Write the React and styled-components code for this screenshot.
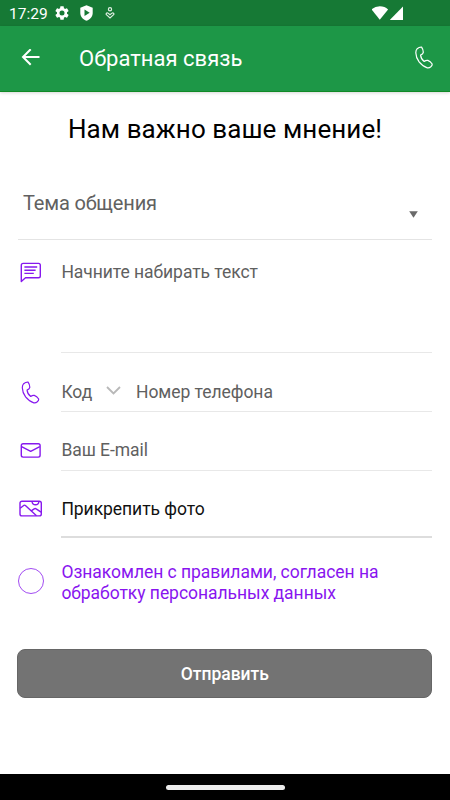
import React from 'react';
import styled, { createGlobalStyle } from 'styled-components';

const GlobalStyle = createGlobalStyle`
  * { box-sizing: border-box; }
  body { margin: 0; background: #fff; font-family: Roboto, "Noto Sans", sans-serif; }
  svg { display: block; flex: none; }
`;

const Screen = styled.div`
  width: 450px;
  height: 800px;
  display: flex;
  flex-direction: column;
  background: #fff;
  overflow: hidden;
`;

const StatusBar = styled.header`
  height: 26px;
  flex: none;
  display: flex;
  align-items: center;
  padding: 0 46px 0 9px;
  background: #167935;
  color: #fff;
`;

const Clock = styled.span`
  width: 46px;
  font-size: 15.5px;
  line-height: 26px;
  padding-top: 2px;
  white-space: nowrap;
`;

const StatusIcons = styled.div`
  display: flex;
  align-items: center;
  gap: ${(p) => p.$gap}px;
  margin-left: ${(p) => (p.$end ? 'auto' : '0')};
`;

const AppBar = styled.div`
  height: 66px;
  flex: none;
  display: flex;
  align-items: center;
  padding: 0 17px 2px 21px;
  background: #1d9747;
  border-bottom: 1px solid #108a26;
  box-shadow: 0 1px 3px rgba(0, 0, 0, 0.16);
  color: #fff;
`;

const AppTitle = styled.h1`
  margin: 0 auto 0 38px;
  padding-top: 2px;
  font-size: 22px;
  font-weight: 400;
  line-height: 30px;
`;

const Form = styled.main`
  flex: 1;
  display: flex;
  flex-direction: column;
  padding: 20px 18px 0;
`;

const Heading = styled.h2`
  margin: 0;
  height: 34px;
  text-align: center;
  font-size: 26px;
  font-weight: 400;
  line-height: 34px;
  letter-spacing: 0.08px;
  color: #000;
  white-space: nowrap;
`;

const Topic = styled.div`
  height: 94px;
  display: flex;
  justify-content: space-between;
  padding: 43px 14px 0 5px;
  border-bottom: 1px solid #e4e4e4;
  font-size: 20px;
  line-height: 28px;
  letter-spacing: -0.17px;
  color: #616161;

  svg { margin-top: 22px; }
`;

const Row = styled.div`
  height: ${(p) => p.$height}px;
  flex: none;
  display: grid;
  grid-template-columns: 43px 1fr;
`;

const IconCell = styled.div`
  padding-top: ${(p) => p.$top}px;
  color: #8718ee;
`;

const Field = styled.div`
  display: flex;
  align-items: flex-start;
  padding: ${(p) => p.$top}px 0 0 0.4px;
  border-bottom: ${(p) => (p.$strong ? '2px solid #dddddd' : '1px solid #e8e8e8')};
  font-size: 17.5px;
  line-height: 24px;
  letter-spacing: -0.05px;
  color: ${(p) => (p.$strong ? '#111' : '#606060')};
  white-space: nowrap;
`;

const CodeSelect = styled.span`
  width: 74.6px;
  display: flex;
  align-items: center;
  gap: 14px;

  svg { margin-top: -3px; }
`;

const Consent = styled.label`
  height: 60px;
  display: grid;
  grid-template-columns: 43.4px 1fr;
  margin-top: 13px;
  padding-top: 11px;
  font-size: 17.5px;
  line-height: 20.5px;
  letter-spacing: -0.04px;
  color: #8814ef;
  white-space: nowrap;
`;

const Radio = styled.span`
  width: 26px;
  height: 26px;
  margin-top: 6px;
  border: 1px solid #a24cf2;
  border-radius: 50%;
`;

const Submit = styled.button`
  height: 49px;
  flex: none;
  margin: 38px -0.3px 0 -0.7px;
  padding: 1px 0 0;
  border: 1px solid #666;
  border-radius: 8px;
  background: #737373;
  color: #fff;
  font: 500 17.5px Roboto, sans-serif;
`;

const NavBar = styled.footer`
  height: 26px;
  flex: none;
  display: flex;
  justify-content: center;
  align-items: center;
  background: #000;
`;

const Handle = styled.div`
  width: 119px;
  height: 5px;
  border-radius: 3px;
  background: #ececec;
`;

const Phone = ({ w, h, stroke }) => (
  <svg width={w} height={h} viewBox="0 0 18 23" fill="none" stroke="currentColor" strokeWidth={stroke} strokeLinejoin="round">
    <path d="M2.2 2.7Q4.2.9 6.6 1.1Q8.3 3.5 8.3 6.3Q8.1 7.8 5.6 9.1Q5.8 12.7 9.2 15.5Q11.2 13.9 12.8 14.4Q15.4 15.4 17.2 18Q17.3 19.4 15.8 20.8Q14.3 22.1 12.3 21.8Q7.9 20.6 4.1 15.9Q.9 11.4.8 6.7Q.8 4.2 2.2 2.7Z" />
  </svg>
);

const Gear = () => (
  <svg width="14" height="14" viewBox="2 2 20 20" fill="#fff">
    <path d="M19.14 12.94c.04-.3.06-.61.06-.94s-.02-.64-.07-.94l2.03-1.58a.49.49 0 0 0 .12-.61l-1.92-3.32a.49.49 0 0 0-.59-.22l-2.39.96a7 7 0 0 0-1.62-.94l-.36-2.54a.48.48 0 0 0-.48-.41h-3.84a.48.48 0 0 0-.47.41l-.36 2.54c-.59.24-1.13.57-1.62.94l-2.39-.96a.48.48 0 0 0-.59.22L2.74 8.87a.47.47 0 0 0 .12.61l2.03 1.58a6.4 6.4 0 0 0 0 1.88l-2.03 1.58a.49.49 0 0 0-.12.61l1.92 3.32c.12.22.37.29.59.22l2.39-.96c.5.38 1.03.7 1.62.94l.36 2.54c.05.24.24.41.48.41h3.84c.24 0 .44-.17.47-.41l.36-2.54a7 7 0 0 0 1.62-.94l2.39.96c.22.08.47 0 .59-.22l1.92-3.32a.47.47 0 0 0-.12-.61zM12 15.6a3.6 3.6 0 1 1 0-7.2 3.6 3.6 0 0 1 0 7.2z" />
  </svg>
);

const Shield = () => (
  <svg width="13" height="16" viewBox="0 0 13 16">
    <path d="M6.5.3 12.7 2.7v5.2c0 3.6-2.6 6.4-6.2 7.8C2.9 14.3.3 11.5.3 7.9V2.7z" fill="#fff" />
    <path d="m4.5 4.6 5.2 3.2-5.2 3.3z" fill="#167935" />
  </svg>
);

const Care = () => (
  <svg width="12" height="12" viewBox="-2 0 12 12" fill="none" stroke="#e0eee2" strokeWidth="1.2">
    <circle cx="5" cy="2.3" r="1.6" />
    <path d="M5 7.8 3 6.1a1.1 1.1 0 1 0-1.4 1.8L5 10.9l3.4-3a1.1 1.1 0 1 0-1.4-1.8z" />
  </svg>
);

const Wifi = () => (
  <svg width="18" height="14" viewBox="0 0 18 14" fill="#fff">
    <path d="M.7 3.5Q4 .3 9 .3t8.3 3.2L9 13.7z" transform="translate(-1.2 0)" />
  </svg>
);

const Signal = () => (
  <svg width="14" height="14" viewBox="0 0 14 14" fill="#fff">
    <path d="M13 .4V14H-.3z" />
  </svg>
);

const Back = () => (
  <svg width="20" height="18" viewBox="0 0 20 18" fill="none" stroke="#fff" strokeWidth="2">
    <path d="M18.5 8H2.2M9.7 0.2 2 8l7.7 7.8" />
  </svg>
);

const Message = () => (
  <svg width="26" height="22" viewBox="0 0 26 22" fill="none" stroke="currentColor" strokeWidth="1.4" strokeLinejoin="round">
    <path d="M3.3 19.5V3.2Q3.3 1.4 5.1 1.4H20.5Q22.3 1.4 22.3 3.2V14Q22.3 15.8 20.5 15.8H7.5Z" />
    <path d="M6.4 5h12.8M6.4 8.3h11.2M6.4 11.4h9.4" />
  </svg>
);

const Mail = () => (
  <svg width="26" height="18" viewBox="0 0 26 18" fill="none" stroke="currentColor" strokeWidth="1.4" strokeLinejoin="round">
    <rect x="3.3" y="1.7" width="18.8" height="13.4" rx="1.8" />
    <path d="m3.6 4.7 9.1 4.6 9.1-4.6" />
  </svg>
);

const Photo = () => (
  <svg width="26" height="18" viewBox="0 0 26 18" fill="none" stroke="currentColor" strokeWidth="1.4" strokeLinejoin="round">
    <rect x="2" y="1.2" width="21.3" height="14.7" rx="2" />
    <path d="M2.2 8.2 6 5.3q.7-.4 1.4.2L18.5 15.7M13.2 10.8l3-2q1.1-.7 2 .1l4.8 3.3M14 1.5q.4 3.3 3.5 3.3t3.4-3.3" />
  </svg>
);

const Chevron = () => (
  <svg width="15" height="9" viewBox="0 0 15 9" fill="none" stroke="#b8b8b8" strokeWidth="1.8">
    <path d="m1 1 6.5 6.5L14 1" />
  </svg>
);

const Caret = () => (
  <svg width="9" height="7" viewBox="0 0 9 7" fill="#6a6a6a">
    <path d="M.2.3h8.6L4.5 6.7z" />
  </svg>
);

export default function App() {
  return (
    <Screen>
      <GlobalStyle />
      <StatusBar>
        <Clock>17:29</Clock>
        <StatusIcons $gap={10.5}>
          <Gear />
          <Shield />
          <Care />
        </StatusIcons>
        <StatusIcons $gap={0} $end>
          <Wifi />
          <Signal />
        </StatusIcons>
      </StatusBar>
      <AppBar>
        <Back />
        <AppTitle>Обратная связь</AppTitle>
        <Phone w={18} h={23} stroke={1.2} />
      </AppBar>
      <Form>
        <Heading>Нам важно ваше мнение!</Heading>
        <Topic>
          Тема общения
          <Caret />
        </Topic>
        <Row $height={113}>
          <IconCell $top={22}><Message /></IconCell>
          <Field $top={20}>Начните набирать текст</Field>
        </Row>
        <Row $height={59}>
          <IconCell $top={28}><Phone w={25} h={23} stroke={1.2} /></IconCell>
          <Field $top={27}>
            <CodeSelect>Код <Chevron /></CodeSelect>
            Номер телефона
          </Field>
        </Row>
        <Row $height={59}>
          <IconCell $top={30}><Mail /></IconCell>
          <Field $top={26}>Ваш E-mail</Field>
        </Row>
        <Row $height={67}>
          <IconCell $top={29}><Photo /></IconCell>
          <Field $top={26} $strong>Прикрепить фото</Field>
        </Row>
        <Consent>
          <Radio />
          <span>Ознакомлен с правилами, согласен на<br />обработку персональных данных</span>
        </Consent>
        <Submit type="button">Отправить</Submit>
      </Form>
      <NavBar>
        <Handle />
      </NavBar>
    </Screen>
  );
}
